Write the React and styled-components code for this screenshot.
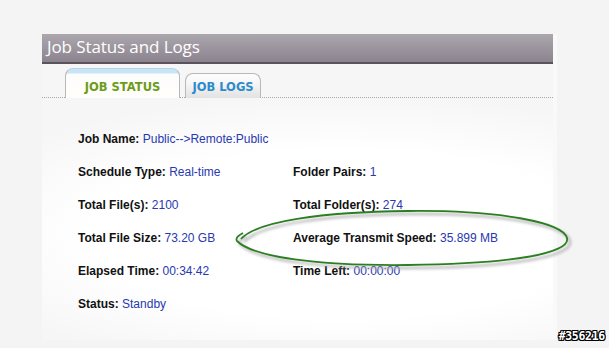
import React from 'react';
import styled, { createGlobalStyle } from 'styled-components';

const Global = createGlobalStyle`
  html, body {
    margin: 0;
    padding: 0;
    background: #f4f4f4;
    width: 609px;
    height: 348px;
    overflow: hidden;
  }
`;

const Page = styled.div`
  position: relative;
  width: 609px;
  height: 348px;
  padding: 34px 0 0 42px;
  box-sizing: border-box;
`;

const Panel = styled.div`
  position: relative;
  width: 511px;
  height: 306px;
  background: radial-gradient(ellipse 420px 140px at 300px 200px, #ffffff 60%, #f6f6f6 100%), #fff;
  box-shadow: 4px 0 0 #f9f9f9;
  display: flex;
  flex-direction: column;
`;

const Header = styled.div`
  height: 28px;
  background: linear-gradient(#aca6ad, #8b8490);
  border-bottom: 2px solid #58545a;
  color: #fff;
  font-family: "Open Sans", "DejaVu Sans", sans-serif;
  font-size: 17px;
  line-height: 25px;
  padding-left: 5px;
  letter-spacing: -0.1px;
`;

const TabBar = styled.div`
  display: flex;
  align-items: flex-end;
  gap: 5px;
  height: 34px;
  padding-left: 23px;
  border-bottom: 1px dotted #a8a8a8;
  box-sizing: border-box;
`;

const Tab = styled.div`
  box-sizing: border-box;
  height: ${(p) => (p.active ? 30 : 25)}px;
  width: ${(p) => (p.active ? 115 : 76)}px;
  margin-bottom: -1px;
  border: 1px solid #b8b8b8;
  border-bottom: none;
  border-radius: 8px 8px 0 0;
  background: ${(p) =>
    p.active
      ? 'linear-gradient(#c8e4f7 0, #c8e4f7 4px, #fcfcfc 5px, #fffefa 100%)'
      : 'linear-gradient(#fdfdfd 0, #f6f6f6 40%, #e2e2e2 100%)'};
  border-top-color: ${(p) => (p.active ? '#b8d4e6' : '#b8b8b8')};
  font-family: "DejaVu Sans", Verdana, sans-serif;
  font-weight: bold;
  font-size: 11.5px;
  color: ${(p) => (p.active ? '#6b9c18' : '#2e8bcb')};
  display: flex;
  justify-content: center;
  align-items: center;
  padding-top: ${(p) => (p.active ? 6 : 2)}px;
`;

const Body = styled.div`
  flex: 1;
  padding: 34px 0 0 36px;
  display: grid;
  grid-template-columns: 215px 1fr;
  grid-auto-rows: 33px;
  font-family: "Liberation Sans", Arial, sans-serif;
  font-size: 12px;
  align-content: start;
`;

const Field = styled.div`
  grid-column: ${(p) => (p.wide ? '1 / span 2' : 'auto')};
  color: #111;
  line-height: 14px;
  white-space: nowrap;

  b {
    font-weight: bold;
  }
  span {
    color: #2838b0;
  }
`;

const Ring = styled.svg`
  position: absolute;
  left: 191px;
  top: 171px;
  overflow: visible;
  pointer-events: none;
`;

const Watermark = styled.div`
  position: absolute;
  right: 4px;
  bottom: 5px;
  font-family: "DejaVu Sans Mono", monospace;
  font-size: 11.5px;
  font-weight: bold;
  letter-spacing: -0.3px;
  color: #fff;
  text-shadow: 1px 0 0 #000, -1px 0 0 #000, 0 1px 0 #000, 0 -1px 0 #000,
    1px 1px 0 #000, -1px -1px 0 #000, 1px -1px 0 #000, -1px 1px 0 #000;
`;

const fields = [
  { label: 'Job Name:', value: 'Public-->Remote:Public', wide: true },
  { label: 'Schedule Type:', value: 'Real-time' },
  { label: 'Folder Pairs:', value: '1' },
  { label: 'Total File(s):', value: '2100' },
  { label: 'Total Folder(s):', value: '274' },
  { label: 'Total File Size:', value: '73.20 GB' },
  { label: 'Average Transmit Speed:', value: '35.899 MB' },
  { label: 'Elapsed Time:', value: '00:34:42' },
  { label: 'Time Left:', value: '00:00:00' },
  { label: 'Status:', value: 'Standby' },
];

const ringPath =
  'M 8 34 C 24 16 90 7 175 6 C 270 5 330 18 334 33 C 338 48 280 59 175 60 C 85 61 20 52 4 36 C 2 33 6 30 10 28';

export default function App() {
  return (
    <Page>
      <Global />
      <Panel>
        <Header>Job Status and Logs</Header>
        <TabBar>
          <Tab active>JOB STATUS</Tab>
          <Tab>JOB LOGS</Tab>
        </TabBar>
        <Body>
          {fields.map((f) => (
            <Field key={f.label} wide={f.wide}>
              <b>{f.label}</b> <span>{f.value}</span>
            </Field>
          ))}
        </Body>
        <Ring width="340" height="66" viewBox="0 0 340 66">
          <defs>
            <filter id="sh" x="-10%" y="-30%" width="120%" height="160%">
              <feGaussianBlur stdDeviation="1.5" />
            </filter>
          </defs>
          <path
            d={ringPath}
            fill="none"
            stroke="#aaa"
            strokeWidth="2"
            filter="url(#sh)"
            transform="translate(3 3)"
          />
          <path d={ringPath} fill="none" stroke="#2b7f22" strokeWidth="1.8" />
        </Ring>
      </Panel>
      <Watermark>#356216</Watermark>
    </Page>
  );
}
